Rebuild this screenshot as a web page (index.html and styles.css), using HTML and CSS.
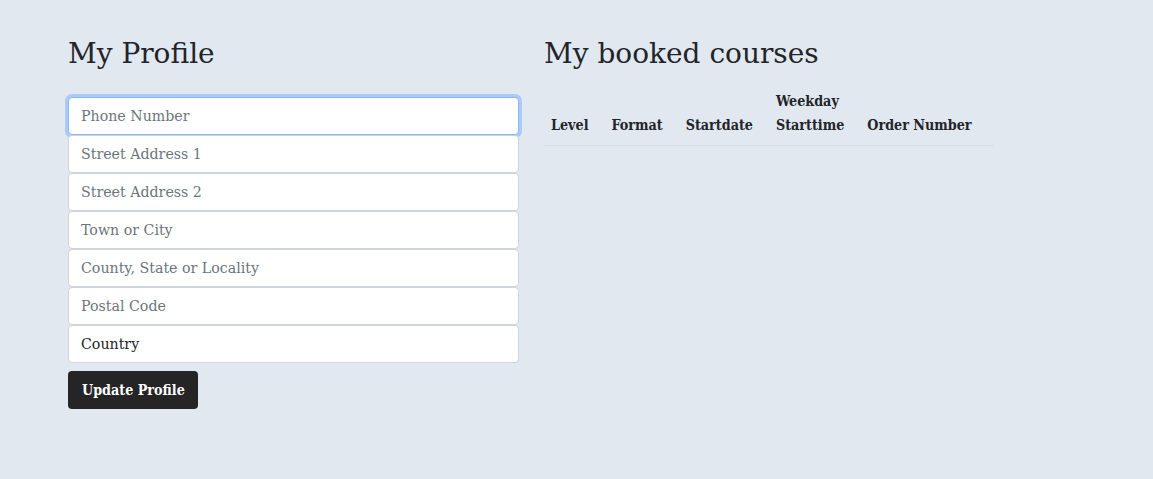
FILE: index.html
```html
<!DOCTYPE html>
<html lang="en">
<head>
<meta charset="utf-8">
<title>My Profile</title>
<link rel="stylesheet" href="styles.css">
</head>
<body>
<main class="page">
  <section class="col">
    <h1 class="title">My Profile</h1>
    <form class="profile-form">
      <input class="field field-focus" type="text" placeholder="Phone Number">
      <input class="field" type="text" placeholder="Street Address 1">
      <input class="field" type="text" placeholder="Street Address 2">
      <input class="field" type="text" placeholder="Town or City">
      <input class="field" type="text" placeholder="County, State or Locality">
      <input class="field" type="text" placeholder="Postal Code">
      <div class="field field-select">Country</div>
      <button class="btn" type="button">Update Profile</button>
    </form>
  </section>
  <section class="col">
    <h1 class="title">My booked courses</h1>
    <table class="courses">
      <thead>
        <tr>
          <th>Level</th>
          <th>Format</th>
          <th>Startdate</th>
          <th>Weekday<br>Starttime</th>
          <th class="wide">Order Number</th>
        </tr>
      </thead>
    </table>
  </section>
</main>
</body>
</html>
```
FILE: styles.css
```css
* { box-sizing: border-box; }
html, body { margin: 0; padding: 0; }
body {
  background: #e2e8f0;
  color: #212529;
  font-family: "DejaVu Serif", serif;
  font-size: 14px;
  height: 479px;
}
.page {
  display: flex;
  gap: 25px;
  padding: 35px 0 0 68px;
}
.col { width: 451px; }
.title {
  margin: 0 0 24px;
  font-size: 28px;
  font-weight: 400;
  line-height: 38px;
}
.profile-form {
  display: flex;
  flex-direction: column;
  align-items: flex-start;
}
.field {
  width: 451px;
  height: 38px;
  border: 1px solid #ced4da;
  border-radius: 4px;
  background: #fff;
  padding: 0 12px;
  font-family: inherit;
  font-size: 14.2px;
  color: #212529;
  outline: none;
}
.field::placeholder { color: #6c757d; }
.field-focus {
  border-color: #86b7fe;
  box-shadow: 0 0 0 3px rgba(13, 110, 253, 0.25);
}
.field-select {
  display: flex;
  align-items: center;
}
.btn {
  margin-top: 8px;
  height: 38px;
  padding: 0 13px 0 14px;
  background: #252525;
  color: #fff;
  border: none;
  border-radius: 4px;
  font-family: "DejaVu Serif", serif;
  font-stretch: condensed;
  font-size: 14.2px;
  font-weight: 700;
}
.courses {
  width: 450px;
  border-collapse: collapse;
  margin-top: -16px;
}
.courses th {
  text-align: left;
  vertical-align: bottom;
  padding: 8px 16px 8px 7px;
  font-stretch: condensed;
  font-size: 14.2px;
  font-weight: 700;
  line-height: 24px;
  white-space: nowrap;
  border-bottom: 1px solid #d8dde3;
}
.courses th.wide { width: 100%; }
```
